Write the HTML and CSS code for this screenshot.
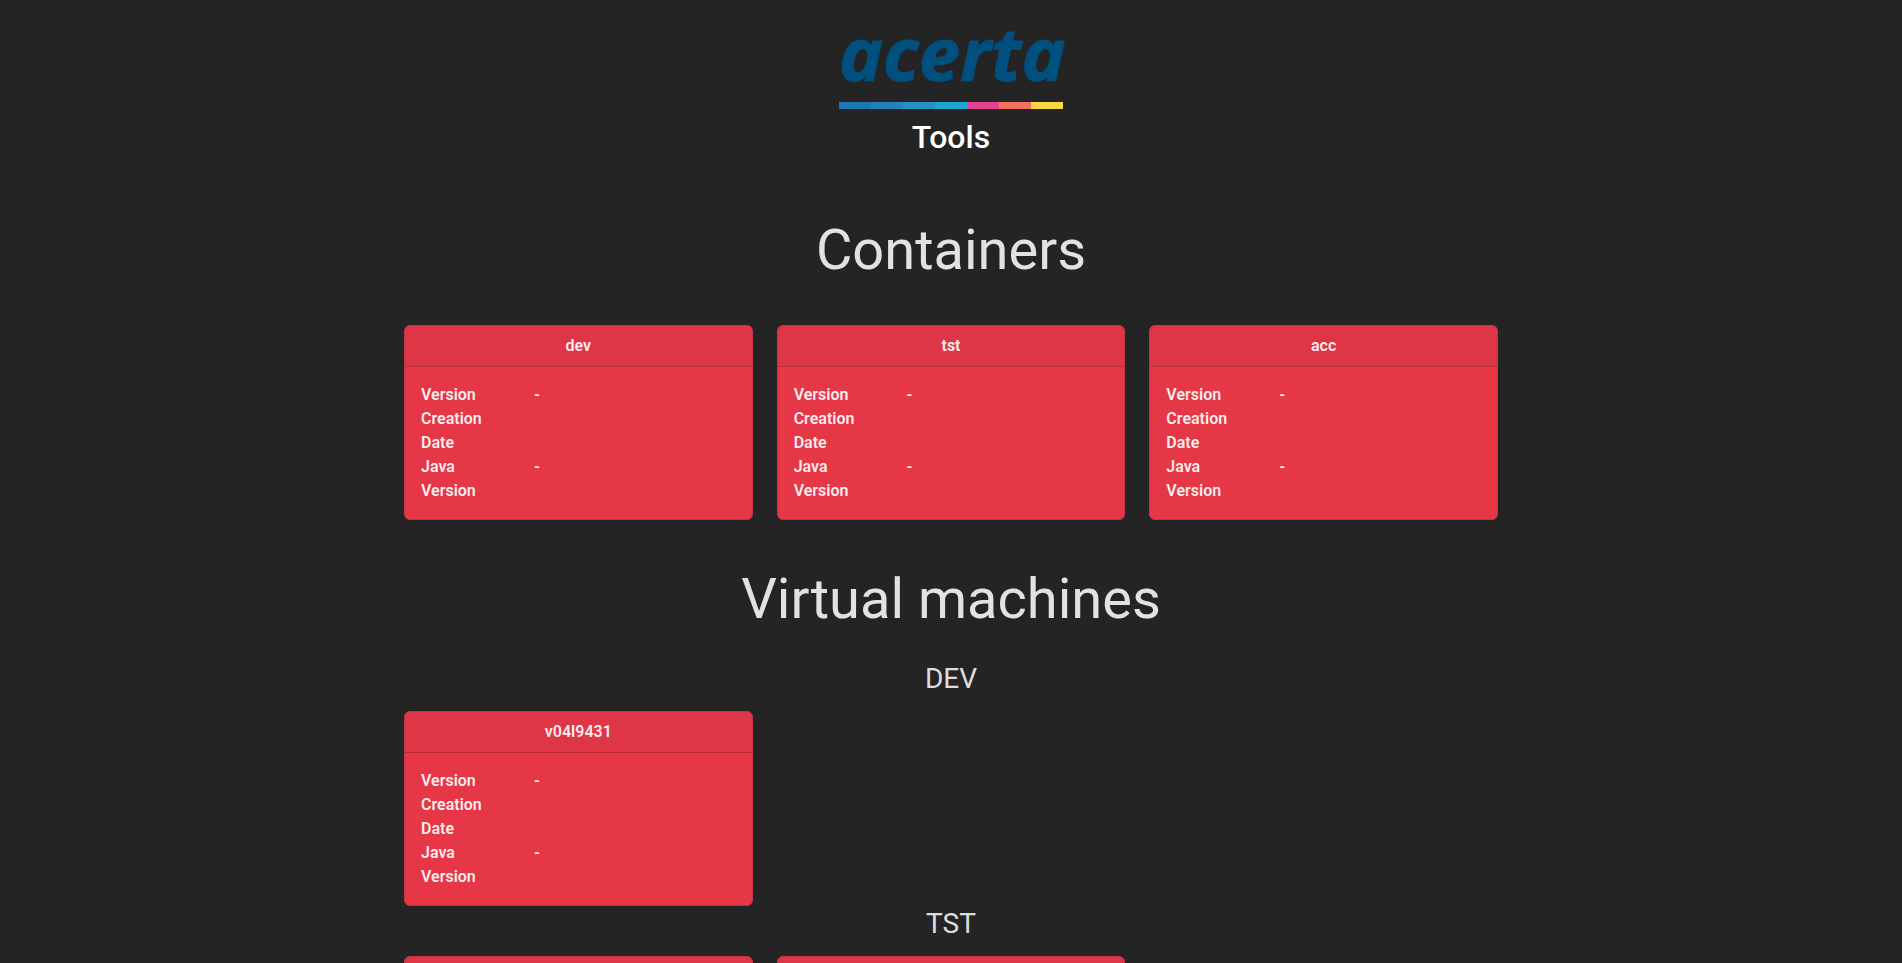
FILE: index.html
```html
<!DOCTYPE html>
<html lang="en">
<head>
<meta charset="utf-8">
<title>Acerta Tools</title>
<link rel="stylesheet" href="styles.css">
</head>
<body>
<header class="brand">
  <svg class="logo" viewBox="0 0 224 88" role="img" aria-label="acerta">
    <text class="logo-text" x="0" y="59">acerta</text>
    <rect x="0" y="80" width="32" height="7" fill="#1c77b5"/>
    <rect x="32" y="80" width="32" height="7" fill="#2880bc"/>
    <rect x="64" y="80" width="32" height="7" fill="#2391c8"/>
    <rect x="96" y="80" width="32" height="7" fill="#1ba4d4"/>
    <rect x="128" y="80" width="32" height="7" fill="#e5418f"/>
    <rect x="160" y="80" width="32" height="7" fill="#f0705c"/>
    <rect x="192" y="80" width="32" height="7" fill="#fdd53e"/>
  </svg>
  <p class="title">Tools</p>
</header>
<main class="page">
  <section>
    <h1 class="heading">Containers</h1>
    <div class="cards">
      <article class="card">
        <h3 class="card-header">dev</h3>
        <dl class="card-body">
          <div class="row"><dt>Version</dt><dd>-</dd></div>
          <div class="row"><dt>Creation Date</dt><dd></dd></div>
          <div class="row"><dt>Java Version</dt><dd>-</dd></div>
        </dl>
      </article>
      <article class="card">
        <h3 class="card-header">tst</h3>
        <dl class="card-body">
          <div class="row"><dt>Version</dt><dd>-</dd></div>
          <div class="row"><dt>Creation Date</dt><dd></dd></div>
          <div class="row"><dt>Java Version</dt><dd>-</dd></div>
        </dl>
      </article>
      <article class="card">
        <h3 class="card-header">acc</h3>
        <dl class="card-body">
          <div class="row"><dt>Version</dt><dd>-</dd></div>
          <div class="row"><dt>Creation Date</dt><dd></dd></div>
          <div class="row"><dt>Java Version</dt><dd>-</dd></div>
        </dl>
      </article>
    </div>
  </section>
  <section>
    <h1 class="heading">Virtual machines</h1>
    <h2 class="subheading">DEV</h2>
    <div class="cards">
      <article class="card">
        <h3 class="card-header">v04l9431</h3>
        <dl class="card-body">
          <div class="row"><dt>Version</dt><dd>-</dd></div>
          <div class="row"><dt>Creation Date</dt><dd></dd></div>
          <div class="row"><dt>Java Version</dt><dd>-</dd></div>
        </dl>
      </article>
    </div>
    <h2 class="subheading">TST</h2>
    <div class="cards">
      <article class="card card-empty"></article>
      <article class="card card-empty"></article>
    </div>
  </section>
</main>
</body>
</html>
```
FILE: styles.css
```css
* { box-sizing: border-box; }

body {
  margin: 0;
  height: 100vh;
  overflow: hidden;
  background: #242424;
  color: rgba(255, 255, 255, 0.87);
  font-family: Roboto, "Liberation Sans", sans-serif;
  font-size: 16px;
  line-height: 24px;
}

.brand {
  display: flex;
  flex-direction: column;
  align-items: center;
  padding-top: 22px;
}

.logo {
  width: 224px;
  height: 88px;
  overflow: visible;
}

.logo-text {
  fill: #00507f;
  stroke: #00507f;
  stroke-width: 1px;
  font: italic 700 74px "Open Sans", "Noto Sans", sans-serif;
}

.title {
  margin: 7px 0 0;
  color: #fff;
  font-size: 32px;
  font-weight: 500;
  line-height: 40px;
}

.page {
  max-width: 1126px;
  margin: 0 auto;
  padding: 57px 16px 0;
}

.heading {
  margin: 0;
  padding-bottom: 39px;
  font-size: 56px;
  font-weight: 400;
  line-height: 72px;
  text-align: center;
}

.subheading {
  margin: 0;
  padding-bottom: 15px;
  font-size: 28px;
  font-weight: 400;
  line-height: 35px;
  text-align: center;
}

.cards {
  display: grid;
  grid-template-columns: repeat(3, 1fr);
  gap: 24px;
}

section + section { padding-top: 43px; }
section + section .heading { padding-bottom: 26px; }

.card {
  border: 1px solid #c73544;
  border-radius: 6px;
  background: #e63747;
  color: rgba(255, 255, 255, 0.92);
  font-weight: 600;
  overflow: hidden;
}

.card-empty { height: 195px; background: #df3647; }

.card-header {
  margin: 0;
  padding: 8px 16px;
  border-bottom: 1px solid #b72d3b;
  background: #df3647;
  font-size: 16px;
  font-weight: 600;
  text-align: center;
}

.card-body {
  margin: 0;
  padding: 16px;
}

.row {
  display: grid;
  grid-template-columns: 1fr 2fr;
  margin: 0 -12px;
}

.row dt,
.row dd {
  margin: 0;
  padding: 0 12px;
}
```
